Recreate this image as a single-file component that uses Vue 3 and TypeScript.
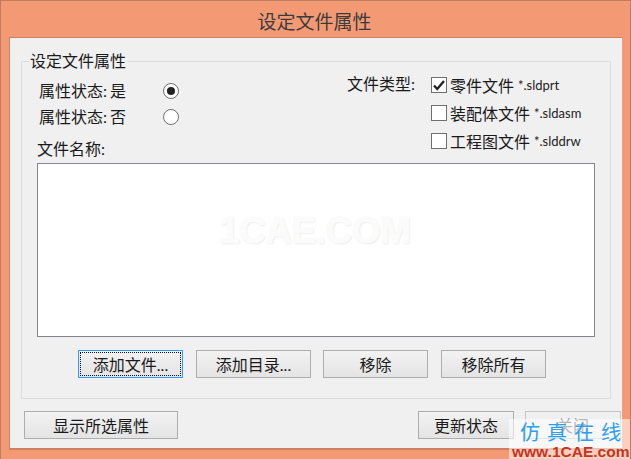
<script setup lang="ts">
interface FileType { label: string; ext: string; checked: boolean }
const fileTypes: FileType[] = [
  { label: '零件文件', ext: '*.sldprt', checked: true },
  { label: '装配体文件', ext: '*.sldasm', checked: false },
  { label: '工程图文件', ext: '*.slddrw', checked: false },
]
</script>

<template>
  <div class="window">
    <header class="titlebar">设定文件属性</header>
    <main class="client">
      <section class="group">
        <span class="legend">设定文件属性</span>
        <div class="top">
          <div class="left">
            <div class="state-row"><span class="state-label">属性状态: 是</span><span class="radio on"></span></div>
            <div class="state-row"><span class="state-label">属性状态: 否</span><span class="radio"></span></div>
            <div class="name-label">文件名称:</div>
          </div>
          <div class="type-label">文件类型:</div>
          <div class="types">
            <div v-for="t in fileTypes" :key="t.ext" class="type-row">
              <span class="check">
                <svg v-if="t.checked" width="14" height="14" viewBox="0 0 14 14">
                  <path d="M2 7.5 L5.2 11 L12 3" fill="none" stroke="#222" stroke-width="2.4" />
                </svg>
              </span>
              <span class="type-name">{{ t.label }}</span>
              <span class="ext">{{ t.ext }}</span>
            </div>
          </div>
        </div>
        <div class="listbox"><span class="mark">1CAE.COM</span></div>
        <div class="actions">
          <button class="btn focus w-file"><span class="focus-ring">添加文件...</span></button>
          <button class="btn w-dir">添加目录...</button>
          <button class="btn w-rem">移除</button>
          <button class="btn w-all">移除所有</button>
        </div>
      </section>
      <footer class="bottom">
        <button class="btn w-show">显示所选属性</button>
        <div class="bottom-right">
          <button class="btn w-upd">更新状态</button>
          <button class="btn w-close disabled">关闭</button>
        </div>
      </footer>
    </main>
    <div class="stamp">
      <div class="stamp-cn">仿真在线</div>
      <div class="stamp-url">www.1CAE.com</div>
    </div>
  </div>
</template>

<style>
html, body { margin: 0; padding: 0; }
</style>

<style scoped>
.window {
  position: relative;
  box-sizing: border-box;
  width: 631px;
  height: 459px;
  display: flex;
  flex-direction: column;
  overflow: hidden;
  background: #f39a74;
  border: 1px solid #c17c60;
  border-bottom: 0;
  padding: 0 8px 9px;
  font-family: "Lato", "Noto Sans CJK SC", sans-serif;
  font-size: 16px;
  color: #1a1a1a;
}
.titlebar {
  height: 36px;
  flex: none;
  display: flex;
  align-items: center;
  justify-content: center;
  font-size: 19px;
  color: #3b3b3b;
  padding: 2px 2px 0 0;
  box-sizing: border-box;
}
.client {
  flex: 1;
  display: flex;
  flex-direction: column;
  box-sizing: border-box;
  background: #f0f0f0;
  border: 1px solid #cf8064;
  border-bottom-width: 2px;
  border-right-width: 0;
  padding: 23px 11px 0 11px;
}
.group {
  position: relative;
  box-sizing: border-box;
  height: 338px;
  flex: none;
  border: 1px solid #dcdcdc;
  padding: 0 15px;
}
.legend {
  position: absolute;
  top: -12px;
  left: 7px;
  padding: 0 1px;
  background: #f0f0f0;
  line-height: 22px;
}
.top {
  display: flex;
  height: 101px;
}
.left {
  width: 310px;
  padding-top: 16px;
  box-sizing: border-box;
}
.state-row {
  display: flex;
  align-items: center;
  height: 26px;
  padding-left: 2px;
}
.state-label { width: 124px; line-height: 22px; word-spacing: -1px; }
.radio {
  box-sizing: border-box;
  width: 16px;
  height: 16px;
  border-radius: 50%;
  border: 1px solid #6f6f6f;
  background: #fff;
  display: flex;
  align-items: center;
  justify-content: center;
}
.radio.on::after {
  content: "";
  width: 8px;
  height: 8px;
  border-radius: 50%;
  background: #222;
}
.name-label { margin-top: 8px; line-height: 22px; }
.type-label {
  width: 84px;
  padding-top: 11px;
  line-height: 22px;
}
.types { padding-top: 9px; }
.type-row {
  display: flex;
  align-items: center;
  height: 28px;
}
.check {
  box-sizing: border-box;
  width: 16px;
  height: 16px;
  border: 1px solid #6f6f6f;
  background: #fff;
  display: flex;
  align-items: center;
  justify-content: center;
  margin-right: 3px;
}
.ext { font-size: 13px; margin-left: 4px; color: #222; }
.listbox {
  position: relative;
  box-sizing: border-box;
  height: 174px;
  width: 558px;
  background: #fff;
  border: 1px solid #83878c;
}
.mark {
  position: absolute;
  top: 47px;
  left: 181px;
  font-family: "Liberation Sans", sans-serif;
  font-weight: 700;
  font-size: 37px;
  line-height: 40px;
  letter-spacing: -0.5px;
  color: #fbfbfb;
  -webkit-text-stroke: 1px #fbfbfb;
  text-shadow: 1px 1px 2px #e6e6e6;
}
.actions {
  display: flex;
  margin: 13px 0 0 41px;
}
.btn {
  box-sizing: border-box;
  height: 28px;
  padding: 0;
  font: inherit;
  color: #1a1a1a;
  background: linear-gradient(#f2f2f2, #e4e4e4);
  border: 1px solid #adadad;
  flex: none;
  display: flex;
  align-items: center;
  justify-content: center;
}
.btn.focus { border-color: #3399ff; padding: 1px; }
.focus-ring {
  flex: 1;
  align-self: stretch;
  display: flex;
  align-items: center;
  justify-content: center;
  border: 1px dotted #111;
}
.w-file { width: 105px; }
.w-dir { width: 115px; margin-left: 13px; }
.w-rem { width: 105px; margin-left: 12px; }
.w-all { width: 105px; margin-left: 13px; }
.bottom {
  display: flex;
  justify-content: space-between;
  margin: 12px -10px 0 3px;
}
.bottom-right { display: flex; gap: 11px; }
.w-show { width: 154px; }
.w-upd { width: 96px; }
.w-close { width: 96px; }
.disabled { background: #f0f0f0; border-color: #c4c4c4; color: #5f5f5f; }
.stamp {
  position: absolute;
  right: -1px;
  bottom: 0;
  width: 122px;
  height: 40px;
  background: rgba(255, 255, 255, 0.55);
}
.stamp-cn {
  font-family: "Noto Sans CJK SC", sans-serif;
  font-size: 20px;
  line-height: 26px;
  height: 26px;
  padding-left: 11px;
  letter-spacing: 7px;
  color: #2b9ef0;
  white-space: nowrap;
}
.stamp-url {
  font-family: "Liberation Sans", sans-serif;
  font-weight: 700;
  font-size: 15.5px;
  line-height: 14px;
  padding-left: 3px;
  color: #c8321e;
  white-space: nowrap;
}
</style>
